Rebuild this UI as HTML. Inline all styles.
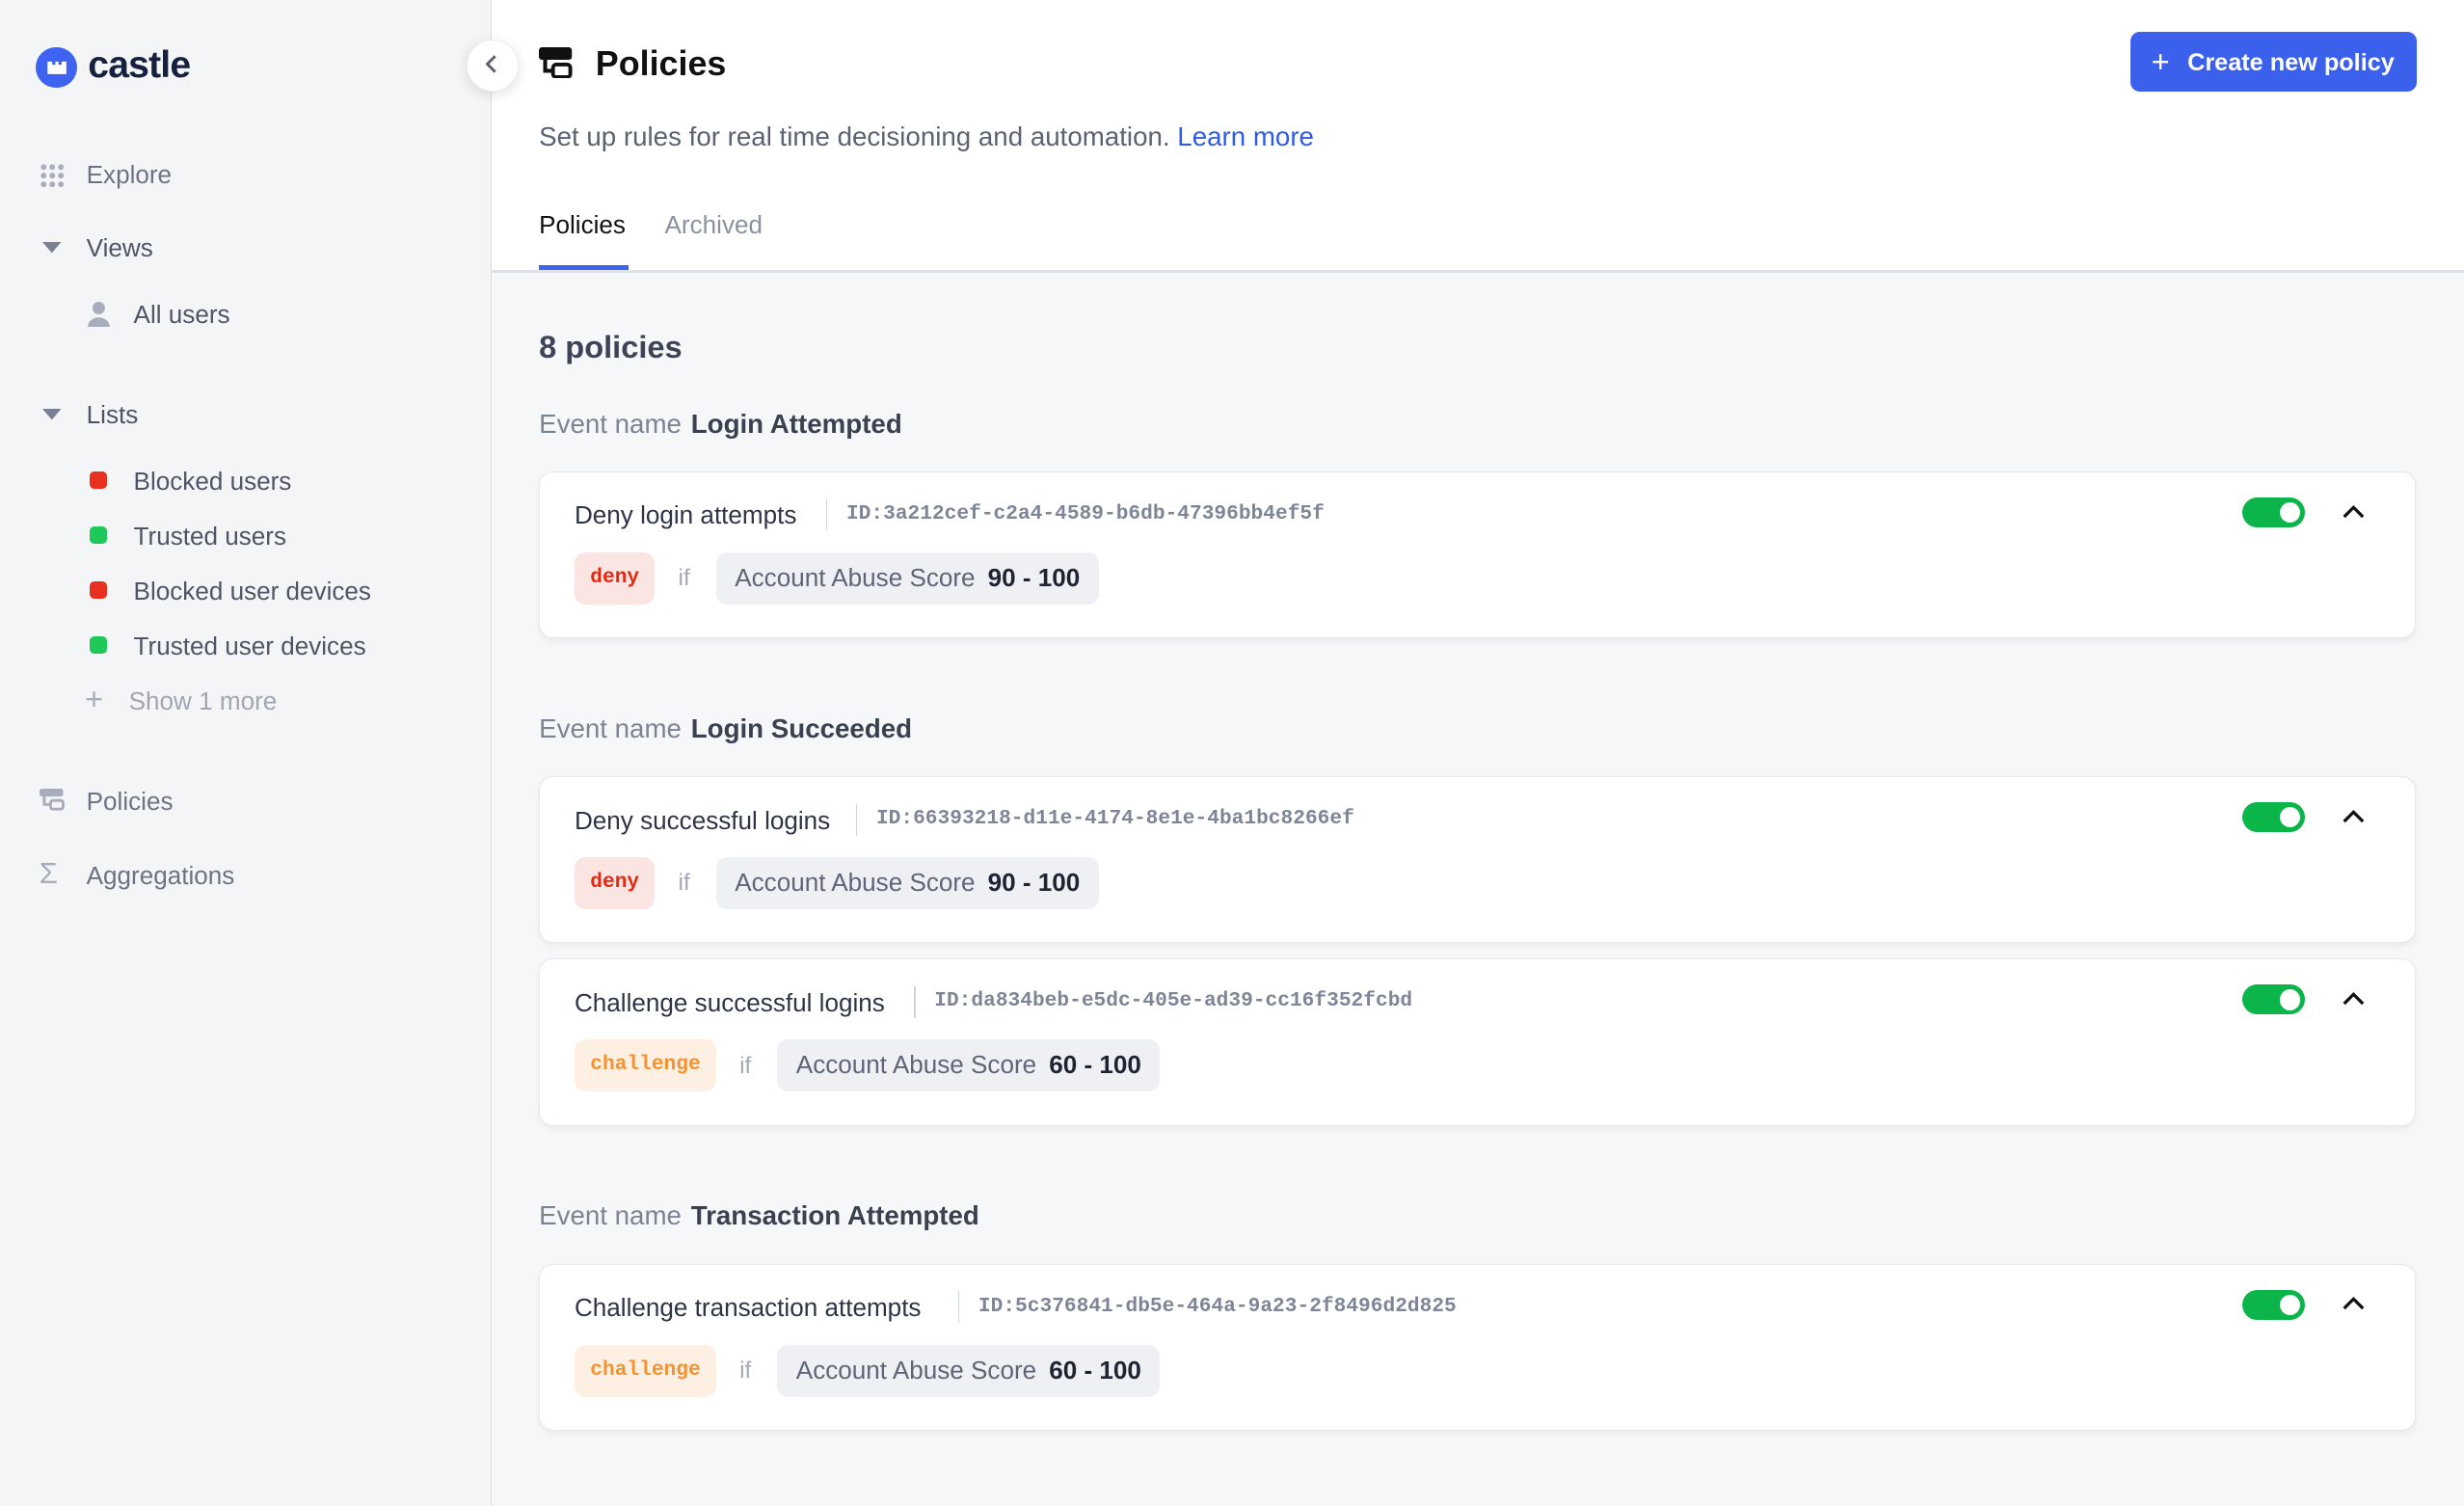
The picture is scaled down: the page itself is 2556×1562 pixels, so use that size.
<!DOCTYPE html>
<html><head><meta charset="utf-8"><style>
html,body{margin:0;padding:0;overflow:hidden}
body{width:2556px;height:1562px;background:#f6f7f9;font-family:"Liberation Sans",sans-serif}
#r{zoom:1.6301;width:1568px;height:958px;position:relative}
.a{position:absolute;white-space:nowrap}
.side{left:0;top:0;width:312px;height:958px;background:#f4f5f7;border-right:1px solid #d9dce2}
.nav{font-size:16px;color:#6b7385;line-height:20px}
.dot{width:11px;height:11px;border-radius:3px}
.card{left:343px;width:1193px;height:105px;background:#fff;border:1px solid #e6e8ec;border-radius:9px;box-shadow:0 2px 4px rgba(0,0,0,.05)}
.nm{left:22px;top:18px;font-size:16px;color:#2d3446}
.sep{top:17px;width:1px;height:20px;background:#cfd3da}
.id{top:19px;font-family:"Liberation Mono",monospace;font-size:13px;color:#7d8597;font-weight:bold}
.tag{top:51px;height:33px;border-radius:7px;font-family:"Liberation Mono",monospace;font-weight:bold;font-size:13px;line-height:33px;padding:0 10px}
.deny{background:#fbe5e3;color:#e22a12}
.ch{background:#fdf0e3;color:#f39232}
.if{top:59px;font-size:15px;color:#a3a9b5}
.sc{top:51px;height:33px;border-radius:7px;background:#eef0f4;font-size:16px;line-height:33px;padding:0 12px 0 12px;color:#5d6577;min-width:0}
.sc b{color:#1f2433;margin-left:8px}
.tg{left:1083px;top:16px;width:40px;height:19px;border-radius:10px;background:#0bb54a}
.tg:after{content:"";position:absolute;right:3px;top:3px;width:13px;height:13px;border-radius:50%;background:#fff}
.cv{left:1147px;top:20px}
.ev{font-size:17px;color:#7b8394}
.ev b{color:#3a4150;margin-left:6px}
</style></head><body><div id="r">
<div class="a side"></div>
<div class="a" style="left:23px;top:30px;width:26px;height:26px;border-radius:50%;background:#3e63f0"></div>
<svg class="a" style="left:28px;top:36px" width="16" height="14" viewBox="0 0 16 14"><path d="M2 3h3v2h2V3h2v2h2V3h3v8H2z" fill="#fff"/></svg>
<div class="a" style="left:56px;top:28px;font-size:24px;font-weight:bold;color:#17203d;letter-spacing:-0.5px">castle</div>
<svg class="a" style="left:26px;top:104px" width="15" height="15"><g fill="#a7adba"><circle cx="2" cy="2" r="1.8"/><circle cx="7.5" cy="2" r="1.8"/><circle cx="13" cy="2" r="1.8"/><circle cx="2" cy="7.5" r="1.8"/><circle cx="7.5" cy="7.5" r="1.8"/><circle cx="13" cy="7.5" r="1.8"/><circle cx="2" cy="13" r="1.8"/><circle cx="7.5" cy="13" r="1.8"/><circle cx="13" cy="13" r="1.8"/></g></svg>
<div class="a nav" style="left:55px;top:101px">Explore</div>
<svg class="a" style="left:27px;top:154px" width="12" height="8"><path d="M0 0h12L6 7z" fill="#7a8192"/></svg>
<div class="a nav" style="left:55px;top:148px;color:#4e5567">Views</div>
<svg class="a" style="left:56px;top:192px" width="14" height="16"><circle cx="7" cy="4" r="4" fill="#a7adba"/><path d="M0 16a7 6 0 0 1 14 0z" fill="#a7adba"/></svg>
<div class="a nav" style="left:85px;top:190px;color:#4e5567">All users</div>
<svg class="a" style="left:27px;top:260px" width="12" height="8"><path d="M0 0h12L6 7z" fill="#7a8192"/></svg>
<div class="a nav" style="left:55px;top:254px;color:#4e5567">Lists</div>
<div class="a dot" style="left:57px;top:300px;background:#e8301f"></div><div class="a nav" style="left:85px;top:296px;color:#4e5567">Blocked users</div>
<div class="a dot" style="left:57px;top:335px;background:#1ec95a"></div><div class="a nav" style="left:85px;top:331px;color:#4e5567">Trusted users</div>
<div class="a dot" style="left:57px;top:370px;background:#e8301f"></div><div class="a nav" style="left:85px;top:366px;color:#4e5567">Blocked user devices</div>
<div class="a dot" style="left:57px;top:405px;background:#1ec95a"></div><div class="a nav" style="left:85px;top:401px;color:#4e5567">Trusted user devices</div>
<div class="a nav" style="left:54px;top:435px;color:#a8adb8;font-size:20px">+</div><div class="a nav" style="left:82px;top:436px;color:#a0a6b2">Show 1 more</div>
<svg class="a" style="left:25px;top:502px" width="17" height="14"><rect x="0" y="0" width="15" height="5" rx="1.5" fill="#a7adba"/><path d="M3 5v5h4" stroke="#a7adba" stroke-width="1.8" fill="none"/><rect x="7" y="7.5" width="8" height="5.5" rx="1.5" stroke="#a7adba" stroke-width="1.8" fill="none"/></svg>
<div class="a nav" style="left:55px;top:500px">Policies</div>
<div class="a nav" style="left:25px;top:546px;font-size:19px;color:#a7adba">Σ</div>
<div class="a nav" style="left:55px;top:547px">Aggregations</div>

<div class="a" style="left:313px;top:0;width:1255px;height:172px;background:#fff;border-bottom:2px solid #dde0e6"></div>
<div class="a" style="left:297px;top:25px;width:32px;height:32px;border-radius:50%;background:#fff;box-shadow:0 2px 8px rgba(0,0,0,.12);border:1px solid #eceef2"></div>
<svg class="a" style="left:306px;top:34px" width="14" height="14" viewBox="0 0 14 14"><path d="M9 2L4 7l5 5" stroke="#5a6272" stroke-width="1.8" fill="none"/></svg>
<svg class="a" style="left:343px;top:30px" width="22" height="20"><rect x="0" y="0" width="21" height="8" rx="2" fill="#111"/><path d="M4 8v7h5" stroke="#111" stroke-width="2.5" fill="none"/><rect x="9" y="11" width="11" height="8" rx="2" stroke="#111" stroke-width="2.4" fill="none"/></svg>
<div class="a" style="left:379px;top:28px;font-size:22px;font-weight:bold;color:#111">Policies</div>
<div class="a" style="left:1356px;top:20px;width:182px;height:38px;border-radius:6px;background:#3a60ec"></div>
<div class="a" style="left:1369px;top:27px;font-size:20px;color:#fff;line-height:24px">+</div>
<div class="a" style="left:1392px;top:31px;font-size:15.5px;font-weight:bold;color:#fff">Create new policy</div>
<div class="a" style="left:343px;top:77px;font-size:17px;color:#5a6274">Set up rules for real time decisioning and automation. <span style="color:#2f5be6">Learn more</span></div>
<div class="a" style="left:343px;top:134px;font-size:16px;color:#111">Policies</div>
<div class="a" style="left:423px;top:134px;font-size:16px;color:#8a91a0">Archived</div>
<div class="a" style="left:343px;top:169px;width:57px;height:3px;background:#3e63f0"></div>

<div class="a" style="left:343px;top:209px;font-size:20px;color:#3d4456;font-weight:bold">8 policies</div>
<div class="a ev" style="left:343px;top:260px">Event name<b>Login Attempted</b></div>
<div class="a ev" style="left:343px;top:454px">Event name<b>Login Succeeded</b></div>
<div class="a ev" style="left:343px;top:764px">Event name<b>Transaction Attempted</b></div>

<div class="a card" style="top:300px">
<div class="a nm">Deny login attempts</div><div class="a sep" style="left:182px"></div><div class="a id" style="left:195px">ID:3a212cef-c2a4-4589-b6db-47396bb4ef5f</div>
<div class="a tag deny" style="left:22px">deny</div><div class="a if" style="left:88px">if</div><div class="a sc" style="left:112px">Account Abuse Score<b>90 - 100</b></div>
<div class="a tg"></div><svg class="a cv" width="14" height="10"><path d="M1 8l6-6 6 6" stroke="#111" stroke-width="2" fill="none"/></svg></div>

<div class="a card" style="top:494px">
<div class="a nm">Deny successful logins</div><div class="a sep" style="left:201px"></div><div class="a id" style="left:214px">ID:66393218-d11e-4174-8e1e-4ba1bc8266ef</div>
<div class="a tag deny" style="left:22px">deny</div><div class="a if" style="left:88px">if</div><div class="a sc" style="left:112px">Account Abuse Score<b>90 - 100</b></div>
<div class="a tg"></div><svg class="a cv" width="14" height="10"><path d="M1 8l6-6 6 6" stroke="#111" stroke-width="2" fill="none"/></svg></div>

<div class="a card" style="top:610px">
<div class="a nm">Challenge successful logins</div><div class="a sep" style="left:238px"></div><div class="a id" style="left:251px">ID:da834beb-e5dc-405e-ad39-cc16f352fcbd</div>
<div class="a tag ch" style="left:22px">challenge</div><div class="a if" style="left:127px">if</div><div class="a sc" style="left:151px">Account Abuse Score<b>60 - 100</b></div>
<div class="a tg"></div><svg class="a cv" width="14" height="10"><path d="M1 8l6-6 6 6" stroke="#111" stroke-width="2" fill="none"/></svg></div>

<div class="a card" style="top:804px">
<div class="a nm">Challenge transaction attempts</div><div class="a sep" style="left:266px"></div><div class="a id" style="left:279px">ID:5c376841-db5e-464a-9a23-2f8496d2d825</div>
<div class="a tag ch" style="left:22px">challenge</div><div class="a if" style="left:127px">if</div><div class="a sc" style="left:151px">Account Abuse Score<b>60 - 100</b></div>
<div class="a tg"></div><svg class="a cv" width="14" height="10"><path d="M1 8l6-6 6 6" stroke="#111" stroke-width="2" fill="none"/></svg></div>
</div></body></html>
